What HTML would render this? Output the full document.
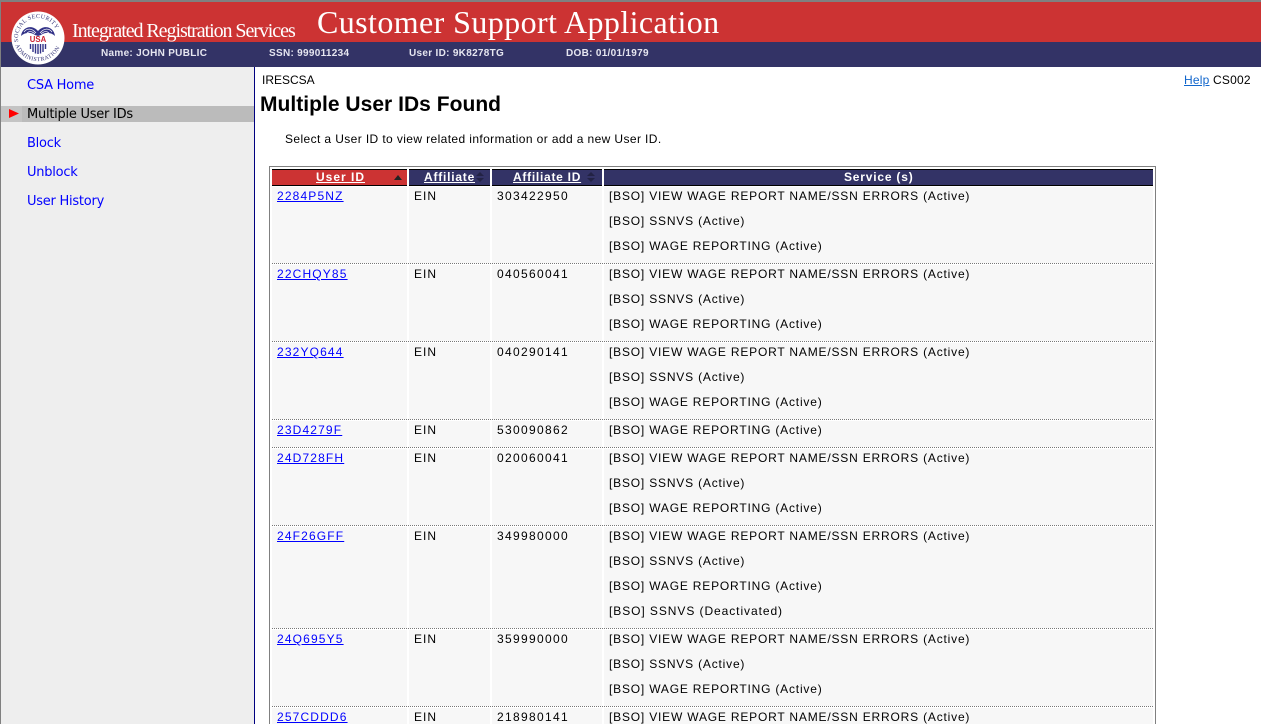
<!DOCTYPE html>
<html><head><meta charset="utf-8"><title>Customer Support Application</title>
<style>
html,body{margin:0;padding:0;width:1261px;height:724px;overflow:hidden;background:#fff}
body{position:relative;font-family:"Liberation Sans",Arial,sans-serif;color:#000}
.a{position:absolute;white-space:nowrap}
#red{left:0;top:0;width:1261px;height:42px;background:#cc3333;border-top:2px solid #808080;box-sizing:border-box}
#navy{left:0;top:42px;width:1261px;height:25px;background:#333366}
#lft{left:0;top:0;width:1px;height:724px;background:#808080}
#side{left:1px;top:67px;width:253px;height:657px;background:#eeeeee;border-right:1px solid #000080}
.n{font:bold 10px/12px "Liberation Sans",sans-serif;color:#e6e6f0;top:48px;letter-spacing:.3px}
.m{font:13px/16px "DejaVu Sans",sans-serif;left:27px;color:#0000ff;letter-spacing:-.25px}
.h{top:169px;height:15px;border-top:1px solid #000;border-bottom:1px solid #000;background:#333366;color:#fff;font:bold 12px/15px "Liberation Sans",sans-serif;letter-spacing:1px;text-align:center}
.h u{color:#fff}
.r{left:272px;width:881px;border-bottom:1px dotted #777;box-sizing:border-box;background-clip:padding-box;background-image:linear-gradient(to right,#f7f7f7 135px,#fff 135px,#fff 137px,#f7f7f7 137px,#f7f7f7 218px,#fff 218px,#fff 220px,#f7f7f7 220px,#f7f7f7 330px,#fff 330px,#fff 332px,#f7f7f7 332px)}
.t{font:12px/14px "Liberation Sans",sans-serif;letter-spacing:.81px}
.l{color:#0000ff;text-decoration:underline;letter-spacing:1.15px}
.e{left:414px;letter-spacing:1px}.i{left:497px;letter-spacing:1.33px}.s{left:609px}.u{left:277px}
</style></head><body>
<div class="a" id="red"></div>
<div class="a" id="navy"></div>
<div class="a" id="lft"></div>
<div class="a" id="side"></div>
<svg class="a" style="left:11px;top:11px" width="54" height="54" viewBox="0 0 54 54">
<defs><path id="tp" d="M7.920 33A20 20 0 1 1 46.080 33"/><path id="bp" d="M3.500 31A24 24 0 0 0 50.500 31"/></defs>
<circle cx="27" cy="27" r="26.500" fill="#fff"/>
<text font-family="Liberation Serif,serif" font-size="6" fill="#333377" letter-spacing=".35"><textPath href="#tp" startOffset="3%">SOCIAL SECURITY</textPath></text>
<text font-family="Liberation Serif,serif" font-size="5.800" fill="#333377" letter-spacing=".5"><textPath href="#bp" startOffset="5%">ADMINISTRATION</textPath></text>
<path d="M10 25C11 16 21 13 27 20 33 13 43 16 44 25 40 21 34 21 30 24L27 25 24 24C20 21 14 21 10 25Z" fill="#333388"/>
<path d="M13 21C16 17 21 17 25 22M16 22C18 20 21 20 24 23M41 21C38 17 33 17 29 22M38 22C36 20 33 20 30 23" stroke="#fff" stroke-width=".7" fill="none"/>
<text x="27" y="31" text-anchor="middle" font-family="Liberation Sans,sans-serif" font-weight="bold" font-size="7.800" fill="#cc2233">USA</text>
<path d="M19.500 33v5M22 33v8M24.500 33v9.500M27 33v10M29.500 33v9.500M32 33v8M34.500 33v5" stroke="#333388" stroke-width="1.400"/>
</svg>
<div class="a" style="left:72px;top:19px;color:#fff;font:20px/24px 'Liberation Serif',serif;letter-spacing:-1.06px">Integrated Registration Services</div>
<div class="a" style="left:317px;top:3px;color:#fff;font:32px/38px 'Liberation Serif',serif;letter-spacing:.41px">Customer Support Application</div>
<div class="a n" style="left:101px">Name: JOHN PUBLIC</div>
<div class="a n" style="left:269px">SSN: 999011234</div>
<div class="a n" style="left:409px">User ID: 9K8278TG</div>
<div class="a n" style="left:566px">DOB: 01/01/1979</div>

<div class="a m" style="top:78px">CSA Home</div>
<div class="a" style="left:1px;top:106px;width:253px;height:16px;background:#bbbbbb"></div>
<div class="a" style="left:1px;top:106px;width:21px;height:16px;background:#c4c4c4"></div>
<svg class="a" style="left:9px;top:109px" width="10" height="9"><path d="M0 0L10 4.500 0 9Z" fill="#ff0000"/></svg>
<div class="a m" style="top:107px;color:#000">Multiple User IDs</div>
<div class="a m" style="top:136px">Block</div>
<div class="a m" style="top:165px">Unblock</div>
<div class="a m" style="top:194px">User History</div>

<div class="a" style="left:262px;top:73px;font-size:12px;line-height:14px">IRESCSA</div>
<div class="a" style="left:260px;top:92px;font:bold 21px/26px 'Liberation Sans',sans-serif;letter-spacing:.03px">Multiple User IDs Found</div>
<div class="a" style="left:285px;top:132px;font-size:12px;line-height:15px;letter-spacing:.39px">Select a User ID to view related information or add a new User ID.</div>
<div class="a" style="left:1184px;top:73px;font-size:12px;line-height:14px;letter-spacing:.2px"><span style="color:#1166cc;text-decoration:underline">Help</span> CS002</div>

<div class="a" style="left:269px;top:166px;width:885px;height:560px;border:1px solid #808080"></div>
<div class="a h" style="left:272px;width:135px;background:#cc3333;text-align:left"><u style="margin-left:44px">User ID</u></div>
<svg class="a" style="left:394px;top:175px" width="8" height="5"><path d="M0 5L4 0 8 5Z" fill="#222"/></svg>
<div class="a h" style="left:409px;width:81px;text-align:left;letter-spacing:.78px"><u style="margin-left:15px">Affiliate</u></div>
<svg class="a" style="left:476px;top:172px" width="8" height="10"><path d="M0 4L4 0 8 4ZM0 6L4 10 8 6Z" fill="#222244"/></svg>
<div class="a h" style="left:492px;width:110px;text-align:left;letter-spacing:.73px"><u style="margin-left:21px">Affiliate ID</u></div>
<svg class="a" style="left:587px;top:172px" width="8" height="10"><path d="M0 4L4 0 8 4ZM0 6L4 10 8 6Z" fill="#222244"/></svg>
<div class="a h" style="left:604px;width:549px;text-align:left;letter-spacing:.8px"><span style="margin-left:240px">Service (s)</span></div>

<div class="a r" style="top:187px;height:77px"></div>
<div class="a r" style="top:265px;height:77px"></div>
<div class="a r" style="top:343px;height:77px"></div>
<div class="a r" style="top:421px;height:27px"></div>
<div class="a r" style="top:449px;height:77px"></div>
<div class="a r" style="top:527px;height:102px"></div>
<div class="a r" style="top:630px;height:77px"></div>
<div class="a r" style="top:708px;height:16px;border-bottom:0"></div>

<div class="a t l u" style="top:189px">2284P5NZ</div><div class="a t e" style="top:189px">EIN</div><div class="a t i" style="top:189px">303422950</div>
<div class="a t s" style="top:189px">[BSO] VIEW WAGE REPORT NAME/SSN ERRORS (Active)</div>
<div class="a t s" style="top:214px">[BSO] SSNVS (Active)</div>
<div class="a t s" style="top:239px">[BSO] WAGE REPORTING (Active)</div>

<div class="a t l u" style="top:267px">22CHQY85</div><div class="a t e" style="top:267px">EIN</div><div class="a t i" style="top:267px">040560041</div>
<div class="a t s" style="top:267px">[BSO] VIEW WAGE REPORT NAME/SSN ERRORS (Active)</div>
<div class="a t s" style="top:292px">[BSO] SSNVS (Active)</div>
<div class="a t s" style="top:317px">[BSO] WAGE REPORTING (Active)</div>

<div class="a t l u" style="top:345px">232YQ644</div><div class="a t e" style="top:345px">EIN</div><div class="a t i" style="top:345px">040290141</div>
<div class="a t s" style="top:345px">[BSO] VIEW WAGE REPORT NAME/SSN ERRORS (Active)</div>
<div class="a t s" style="top:370px">[BSO] SSNVS (Active)</div>
<div class="a t s" style="top:395px">[BSO] WAGE REPORTING (Active)</div>

<div class="a t l u" style="top:423px">23D4279F</div><div class="a t e" style="top:423px">EIN</div><div class="a t i" style="top:423px">530090862</div>
<div class="a t s" style="top:423px">[BSO] WAGE REPORTING (Active)</div>

<div class="a t l u" style="top:451px">24D728FH</div><div class="a t e" style="top:451px">EIN</div><div class="a t i" style="top:451px">020060041</div>
<div class="a t s" style="top:451px">[BSO] VIEW WAGE REPORT NAME/SSN ERRORS (Active)</div>
<div class="a t s" style="top:476px">[BSO] SSNVS (Active)</div>
<div class="a t s" style="top:501px">[BSO] WAGE REPORTING (Active)</div>

<div class="a t l u" style="top:529px">24F26GFF</div><div class="a t e" style="top:529px">EIN</div><div class="a t i" style="top:529px">349980000</div>
<div class="a t s" style="top:529px">[BSO] VIEW WAGE REPORT NAME/SSN ERRORS (Active)</div>
<div class="a t s" style="top:554px">[BSO] SSNVS (Active)</div>
<div class="a t s" style="top:579px">[BSO] WAGE REPORTING (Active)</div>
<div class="a t s" style="top:604px;letter-spacing:.93px">[BSO] SSNVS (Deactivated)</div>

<div class="a t l u" style="top:632px">24Q695Y5</div><div class="a t e" style="top:632px">EIN</div><div class="a t i" style="top:632px">359990000</div>
<div class="a t s" style="top:632px">[BSO] VIEW WAGE REPORT NAME/SSN ERRORS (Active)</div>
<div class="a t s" style="top:657px">[BSO] SSNVS (Active)</div>
<div class="a t s" style="top:682px">[BSO] WAGE REPORTING (Active)</div>

<div class="a t l u" style="top:710px">257CDDD6</div><div class="a t e" style="top:710px">EIN</div><div class="a t i" style="top:710px">218980141</div>
<div class="a t s" style="top:710px">[BSO] VIEW WAGE REPORT NAME/SSN ERRORS (Active)</div>
</body></html>
